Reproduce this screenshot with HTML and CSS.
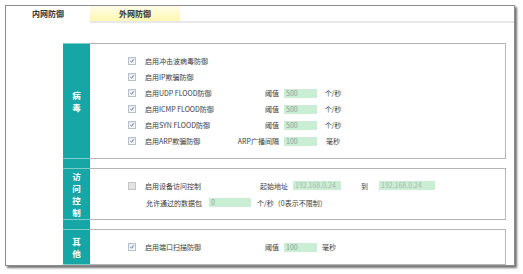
FILE: index.html
```html
<!DOCTYPE html>
<html lang="zh">
<head>
    <meta charset="UTF-8">
    <title>内网防御</title>
    <link rel="stylesheet" href="styles.css">
</head>
<body>
    <div class="frame">
        <div class="tabs">
            <div class="tab active">内网防御</div>
            <div class="tab">外网防御</div>
            <div class="tab-fill"></div>
        </div>
        <div class="content">
            <div class="sections">
                <!-- 病毒 -->
                <div class="sec">
                    <div class="sec-title"><span>病<br>毒</span></div>
                    <div class="sec-body virus">
                        <div class="row">
                            <span class="chk on"><svg viewBox="0 0 8 8"><path d="M2 4.3 L3.4 5.7 L6 2"/></svg></span>
                            <span class="name">启用冲击波病毒防御</span>
                        </div>
                        <div class="row">
                            <span class="chk on"><svg viewBox="0 0 8 8"><path d="M2 4.3 L3.4 5.7 L6 2"/></svg></span>
                            <span class="name">启用IP欺骗防御</span>
                        </div>
                        <div class="row">
                            <span class="chk on"><svg viewBox="0 0 8 8"><path d="M2 4.3 L3.4 5.7 L6 2"/></svg></span>
                            <span class="name">启用UDP FLOOD防御</span>
                            <span class="lbl">阈值</span>
                            <span class="inp">500</span>
                            <span class="unit">个/秒</span>
                        </div>
                        <div class="row">
                            <span class="chk on"><svg viewBox="0 0 8 8"><path d="M2 4.3 L3.4 5.7 L6 2"/></svg></span>
                            <span class="name">启用ICMP FLOOD防御</span>
                            <span class="lbl">阈值</span>
                            <span class="inp">500</span>
                            <span class="unit">个/秒</span>
                        </div>
                        <div class="row">
                            <span class="chk on"><svg viewBox="0 0 8 8"><path d="M2 4.3 L3.4 5.7 L6 2"/></svg></span>
                            <span class="name">启用SYN FLOOD防御</span>
                            <span class="lbl">阈值</span>
                            <span class="inp">500</span>
                            <span class="unit">个/秒</span>
                        </div>
                        <div class="row">
                            <span class="chk on"><svg viewBox="0 0 8 8"><path d="M2 4.3 L3.4 5.7 L6 2"/></svg></span>
                            <span class="name">启用ARP欺骗防御</span>
                            <span class="lbl">ARP广播间隔</span>
                            <span class="inp">100</span>
                            <span class="unit">毫秒</span>
                        </div>
                    </div>
                </div>
                <!-- 访问控制 -->
                <div class="sec">
                    <div class="sec-title"><span>访<br>问<br>控<br>制</span></div>
                    <div class="sec-body access">
                        <div class="row">
                            <span class="chk"></span>
                            <span class="name">启用设备访问控制</span>
                            <span class="lbl">起始地址</span>
                            <span class="inp ip">192.168.0.24</span>
                            <span class="to">到</span>
                            <span class="inp ip wide">192.168.0.24</span>
                        </div>
                        <div class="row indent">
                            <span class="name short">允许通过的数据包</span>
                            <span class="inp pkt">0</span>
                            <span class="note">个/秒（0表示不限制）</span>
                        </div>
                    </div>
                </div>
                <!-- 其他 -->
                <div class="sec">
                    <div class="sec-title"><span>其<br>他</span></div>
                    <div class="sec-body other">
                        <div class="row">
                            <span class="chk on"><svg viewBox="0 0 8 8"><path d="M2 4.3 L3.4 5.7 L6 2"/></svg></span>
                            <span class="name">启用端口扫描防御</span>
                            <span class="lbl">阈值</span>
                            <span class="inp">100</span>
                            <span class="unit left">毫秒</span>
                        </div>
                    </div>
                </div>
            </div>
        </div>
    </div>
</body>
</html>
```

FILE: styles.css
```css
body {
    margin: 0;
    padding: 5px;
    background: #fff;
    font-family: "Noto Sans CJK SC", "Liberation Sans", sans-serif;
    color: #444;
}
.frame {
    width: 508px;
    height: 259px;
    border: 1px solid #8c8c8c;
    box-shadow: 2px 2px 2px rgba(0, 0, 0, 0.55);
    background: #fff;
}
/* 选项卡 */
.tabs {
    display: flex;
    height: 17px;
}
.tab {
    height: 15px;
    line-height: 15px;
    text-align: center;
    font-size: 8px;
    font-weight: bold;
    color: #333;
}
.tab.active {
    width: 84px;
}
.tab:not(.active) {
    width: 90px;
    background: linear-gradient(#fffde8, #fff6b0);
    border-bottom: 2px solid #e8e8e8;
}
.tab-fill {
    flex: 1;
    border-bottom: 2px solid #e8e8e8;
    height: 15px;
}
.content {
    padding: 20px 8px 0 57px;
}
.sections {
    display: flex;
    flex-direction: column;
    gap: 9px;
    background: linear-gradient(to right, #17a6a6 27px, transparent 27px);
}
.sec {
    display: flex;
}
.sec-title {
    width: 27px;
    display: flex;
    align-items: center;
    justify-content: center;
    border-top: 1px solid #7fcccc;
    border-bottom: 1px solid #7fcccc;
    color: #fff;
    font-size: 8.5px;
    font-weight: bold;
    line-height: 12px;
    text-align: center;
}
.sec-body {
    flex: 1;
    border: 1px solid #b4b4b4;
    border-left: none;
    padding: 9px 0 9px 38px;
    background: #fff;
}
.sec-body.access {
    padding: 8px 0 8px 38px;
}
.sec-body.access .row {
    height: 17px;
}
.row {
    display: flex;
    align-items: center;
    height: 16px;
    font-size: 7px;
    white-space: nowrap;
    color: #3a3a3a;
}
.row.indent {
    padding-left: 18px;
}
/* 复选框 */
.chk {
    width: 8px;
    height: 8px;
    box-sizing: border-box;
    border: 1px solid #b8c0cc;
    background: linear-gradient(#e6e9ee, #f7f8fa);
    margin-right: 9px;
}
.chk svg {
    display: block;
    width: 6px;
    height: 6px;
}
.chk svg path {
    fill: none;
    stroke: #2f5fae;
    stroke-width: 1.1;
}
.chk:not(.on) {
    border-color: #c4c4c4;
    background: #e4e4e4;
}
.name {
    width: 87px;
}
.access .name {
    width: 115px;
}
.access .name.short {
    width: 63px;
}
.lbl {
    width: 47px;
    text-align: right;
}
.access .lbl {
    width: auto;
}
.inp {
    width: 33px;
    height: 9px;
    line-height: 9px;
    margin-left: 5px;
    padding-left: 2px;
    box-sizing: border-box;
    background: #c9eed3;
    color: #8aa396;
}
.inp.ip {
    width: 48px;
    color: #a9b7b0;
}
.inp.wide {
    width: 56px;
    margin-left: 11px;
}
.inp.pkt {
    width: 42px;
    margin-left: 0;
}
.to {
    margin-left: 20px;
}
.unit {
    width: 22px;
    margin-left: 5px;
    text-align: center;
}
.unit.left {
    text-align: left;
}
.note {
    margin-left: 6px;
}
```
